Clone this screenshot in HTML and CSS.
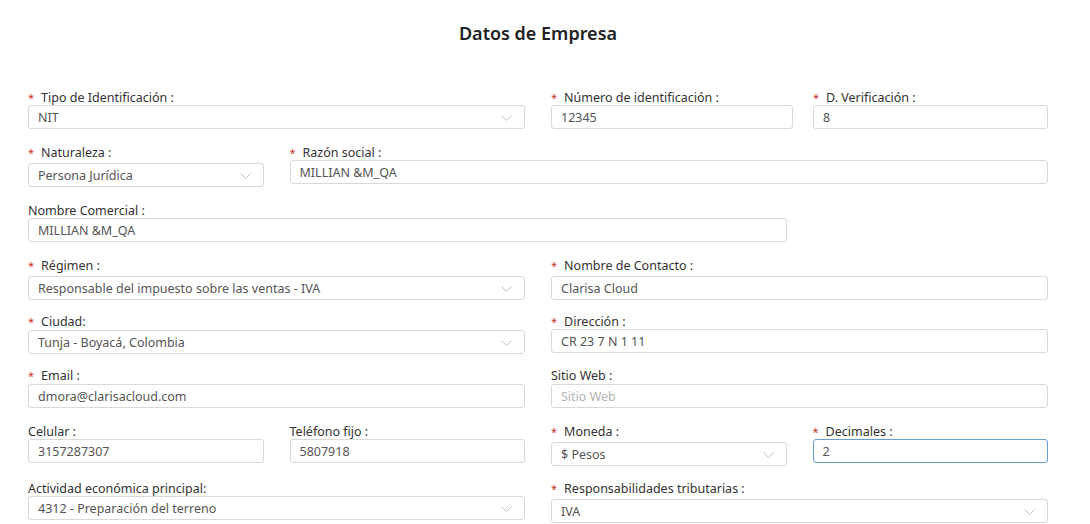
FILE: index.html
```html
<!DOCTYPE html>
<html lang="es">
<head>
<meta charset="utf-8">
<title>Datos de Empresa</title>
<link rel="stylesheet" href="styles.css">
</head>
<body>
<div class="page">
<h1 class="title">Datos de Empresa</h1>
<form class="form">
  <div class="row">
    <div class="field span2">
      <label class="label"><span class="req">*</span>Tipo de Identificación :</label>
      <div class="control select">NIT<svg class="arrow" viewBox="0 0 11 6"><polyline points="0.5,0.5 5.5,5.5 10.5,0.5"/></svg></div>
    </div>
    <div class="half span2">
      <div class="field">
        <label class="label"><span class="req">*</span>Número de identificación :</label>
        <div class="control">12345</div>
      </div>
      <div class="field">
        <label class="label"><span class="req">*</span>D. Verificación :</label>
        <div class="control">8</div>
      </div>
    </div>
  </div>

  <div class="row">
    <div class="field">
      <label class="label"><span class="req">*</span>Naturaleza :</label>
      <div class="control select low">Persona Jurídica<svg class="arrow" viewBox="0 0 11 6"><polyline points="0.5,0.5 5.5,5.5 10.5,0.5"/></svg></div>
    </div>
    <div class="field span3">
      <label class="label"><span class="req">*</span>Razón social :</label>
      <div class="control">MILLIAN &amp;M_QA</div>
    </div>
  </div>

  <div class="row">
    <div class="field span3">
      <label class="label">Nombre Comercial :</label>
      <div class="control">MILLIAN &amp;M_QA</div>
    </div>
  </div>

  <div class="row">
    <div class="field span2">
      <label class="label"><span class="req">*</span>Régimen :</label>
      <div class="control select low">Responsable del impuesto sobre las ventas - IVA<svg class="arrow" viewBox="0 0 11 6"><polyline points="0.5,0.5 5.5,5.5 10.5,0.5"/></svg></div>
    </div>
    <div class="field span2">
      <label class="label"><span class="req">*</span>Nombre de Contacto :</label>
      <div class="control low">Clarisa Cloud</div>
    </div>
  </div>

  <div class="row">
    <div class="field span2">
      <label class="label"><span class="req">*</span>Ciudad:</label>
      <div class="control select mid">Tunja - Boyacá, Colombia<svg class="arrow" viewBox="0 0 11 6"><polyline points="0.5,0.5 5.5,5.5 10.5,0.5"/></svg></div>
    </div>
    <div class="field span2">
      <label class="label"><span class="req">*</span>Dirección :</label>
      <div class="control">CR 23 7 N 1 11</div>
    </div>
  </div>

  <div class="row">
    <div class="field span2">
      <label class="label"><span class="req">*</span>Email :</label>
      <div class="control mid">dmora@clarisacloud.com</div>
    </div>
    <div class="field span2">
      <label class="label">Sitio Web :</label>
      <div class="control placeholder mid">Sitio Web</div>
    </div>
  </div>

  <div class="row">
    <div class="field">
      <label class="label">Celular :</label>
      <div class="control">3157287307</div>
    </div>
    <div class="field">
      <label class="label">Teléfono fijo :</label>
      <div class="control">5807918</div>
    </div>
    <div class="field">
      <label class="label"><span class="req">*</span>Moneda :</label>
      <div class="control select low">$ Pesos<svg class="arrow" viewBox="0 0 11 6"><polyline points="0.5,0.5 5.5,5.5 10.5,0.5"/></svg></div>
    </div>
    <div class="field">
      <label class="label"><span class="req">*</span>Decimales :</label>
      <div class="control focused">2</div>
    </div>
  </div>

  <div class="row">
    <div class="field span2">
      <label class="label">Actividad económica principal:</label>
      <div class="control select">4312 - Preparación del terreno<svg class="arrow" viewBox="0 0 11 6"><polyline points="0.5,0.5 5.5,5.5 10.5,0.5"/></svg></div>
    </div>
    <div class="field span2">
      <label class="label"><span class="req">*</span>Responsabilidades tributarias :</label>
      <div class="control select low">IVA<svg class="arrow" viewBox="0 0 11 6"><polyline points="0.5,0.5 5.5,5.5 10.5,0.5"/></svg></div>
    </div>
  </div>
</form>
</div>
</body>
</html>
```

FILE: styles.css
```css
* { box-sizing: border-box; }
html, body { margin: 0; padding: 0; background: #fff; }
body {
  font-family: "Noto Sans", "Open Sans", sans-serif;
  color: #333;
  width: 1090px;
  height: 524px;
  overflow: hidden;
}
.page {
  margin-left: 28px;
  width: 1020px;
}
.title {
  margin: 0;
  padding-top: 21px;
  font-size: 18px;
  line-height: 24px;
  font-weight: 600;
  color: #222;
  text-align: center;
}
.form {
  margin-top: 44px;
  display: grid;
  grid-template-rows: 55px 58px 55px 56px 54px 56px 57px 44px;
}
.row {
  display: grid;
  grid-template-columns: repeat(4, 1fr);
  column-gap: 26px;
  align-items: start;
}
.span2 { grid-column: span 2; }
.span3 { grid-column: span 3; }
.half {
  display: grid;
  grid-template-columns: 242px 1fr;
  column-gap: 20px;
}
.field { display: flex; flex-direction: column; min-width: 0; }
.label {
  height: 16px;
  line-height: 17px;
  font-size: 12.5px;
  color: #333;
  white-space: nowrap;
}
.req {
  color: #c8352b;
  font-size: 11px;
  margin-right: 7px;
}
.control {
  position: relative;
  height: 24px;
  line-height: 23px;
  border: 1px solid #d9d9d9;
  border-radius: 3px;
  padding: 0 9px;
  font-size: 12.5px;
  color: #555;
  white-space: nowrap;
  overflow: hidden;
}
.control.low { margin-top: 3px; }
.control.mid { margin-top: 1px; }
.control.placeholder { color: #b5b5b5; }
.control.focused { border-color: #6a9dcf; }
.arrow {
  position: absolute;
  right: 12px;
  top: 9px;
  width: 11px;
  height: 6px;
  fill: none;
  stroke: #c2c2c2;
  stroke-width: 1;
}
```
